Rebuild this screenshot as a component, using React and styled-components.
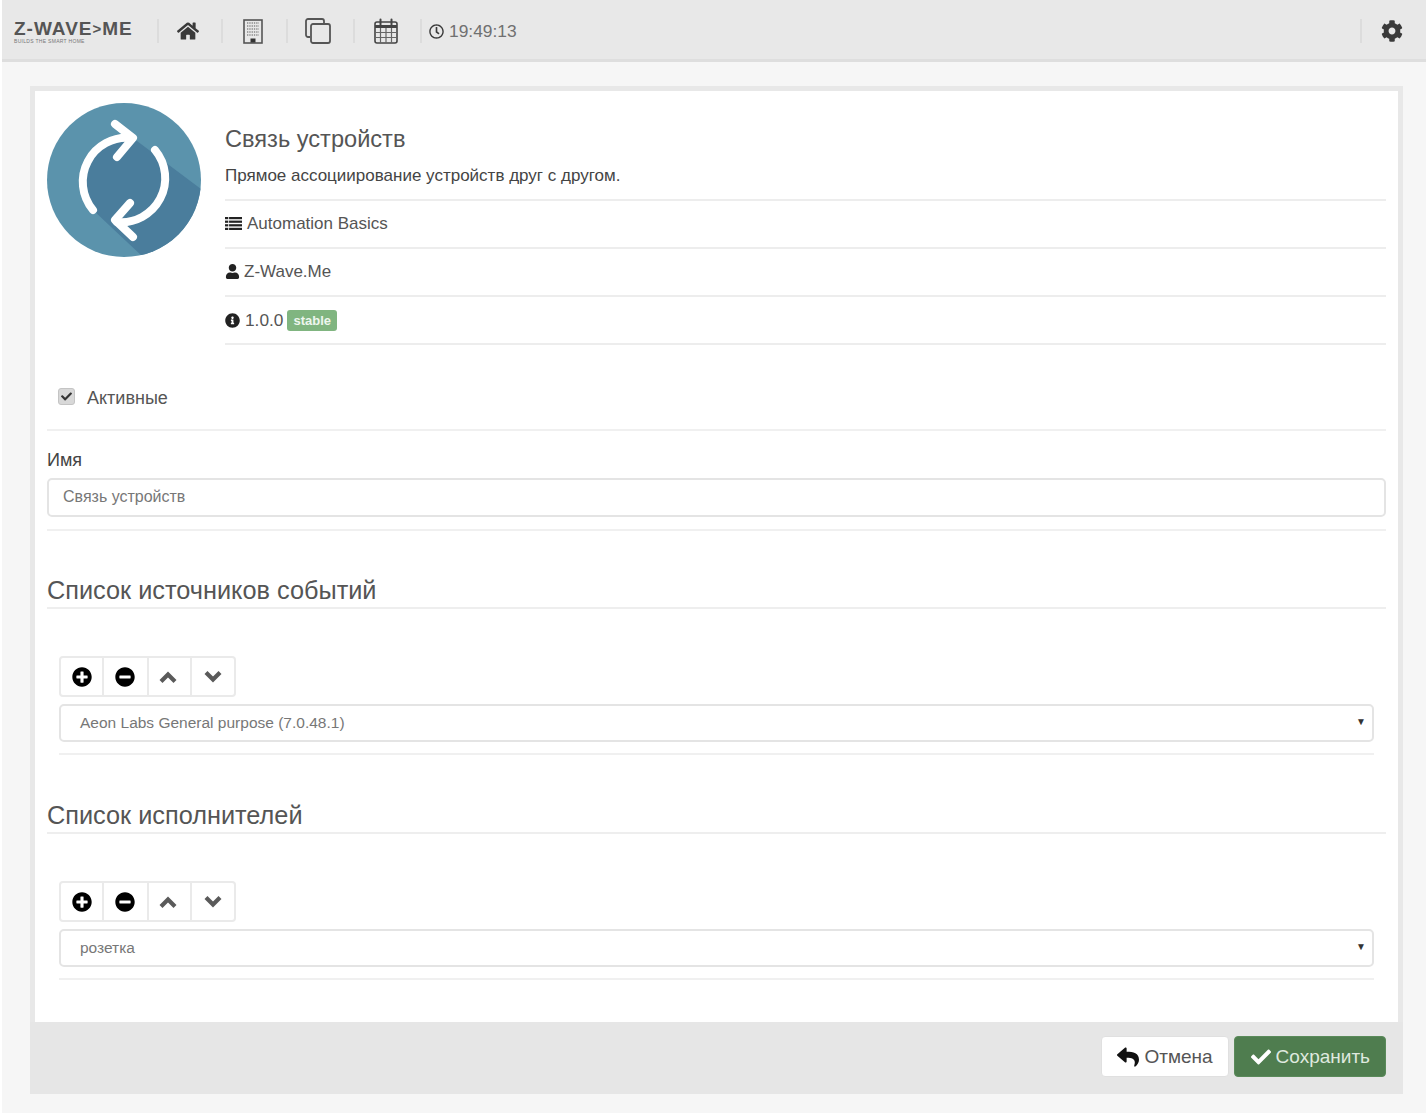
import React from 'react';
import styled, { createGlobalStyle } from 'styled-components';
import {
  FaHome, FaCog, FaUser, FaInfoCircle, FaCheck, FaReply,
  FaPlusCircle, FaMinusCircle, FaRegClock,
} from 'react-icons/fa';

const GlobalStyle = createGlobalStyle`
  html, body { margin: 0; padding: 0; background: #fff; }
  body { font-family: "Liberation Sans", Arial, sans-serif; color: #555; }
  * { box-sizing: border-box; }
`;

const Page = styled.div`
  width: 1428px;
  height: 1116px;
  padding: 0 2px 3px;
  overflow: hidden;
`;

const Inner = styled.div`
  height: 100%;
  background: #f6f6f6;
`;

const TopBar = styled.header`
  display: flex;
  align-items: center;
  height: 62px;
  padding: 3px 4px 0 12px;
  background: #e8e8e8;
  border-bottom: 3px solid #dedede;
`;

const Logo = styled.div`
  width: 143px;
  display: flex;
  flex-direction: column;
  color: #555;
`;

const LogoMark = styled.span`
  display: flex;
  align-items: center;
  font-size: 19px;
  line-height: 19px;
  font-weight: 700;
  letter-spacing: 1px;
`;

const LogoChevron = styled.span`
  font-size: 15px;
  letter-spacing: 0;
  margin: 0 1px 0 0;
`;

const LogoTag = styled.span`
  font-size: 5px;
  line-height: 6px;
  letter-spacing: 0.3px;
  color: #777;
`;

const NavSep = styled.span`
  width: 2px;
  height: 24px;
  background: #dcdcdc;
`;

const NavIcon = styled.span`
  display: flex;
  justify-content: center;
  align-items: center;
  width: ${p => p.$w}px;
  padding-right: ${p => p.$nudge || 0}px;
  color: #3a3a3a;
  font-size: 22px;
`;

const Clock = styled.span`
  display: flex;
  align-items: center;
  gap: 5px;
  margin-left: 7px;
  font-size: 17.4px;
  color: #707070;
  svg { font-size: 15px; color: #3a3a3a; }
`;

const Spacer = styled.div`
  flex: 1;
`;

const Card = styled.main`
  margin: 24px 23px 0 28px;
  border: 5px solid #e8e8e8;
  border-bottom: 0;
  background: #fff;
`;

const CardBody = styled.div`
  padding: 12px 12px 42px;
  height: 931px;
`;

const Head = styled.div`
  display: flex;
  gap: 24px;
`;

const Avatar = styled.svg`
  width: 154px;
  height: 154px;
  flex: none;
`;

const Info = styled.div`
  flex: 1;
`;

const InfoTitle = styled.div`
  height: 48px;
  padding-top: 21px;
  font-size: 23.6px;
  line-height: 30px;
  color: #555;
`;

const InfoRow = styled.div`
  display: flex;
  align-items: center;
  gap: ${p => p.$gap || 4}px;
  height: 48px;
  padding-bottom: ${p => p.$flush ? 0 : 1}px;
  border-bottom: 2px solid #ededed;
  font-size: 17px;
  color: #555;
  svg { color: #222; font-size: 15px; flex: none; }
`;

const DescRow = styled(InfoRow)`
  height: 50px;
  padding: 2px 0 0;
  color: #444;
`;

const VersionText = styled.span`
  font-size: 17.3px;
  margin-left: 1px;
`;

const Badge = styled.span`
  padding: 3px 6px;
  border-radius: 3px;
  background: #80b580;
  color: #eef6ee;
  font-size: 13px;
  line-height: 15px;
  font-weight: 700;
`;

const ActiveRow = styled.label`
  display: flex;
  align-items: center;
  gap: 12px;
  height: 86px;
  padding: 22px 0 0 11px;
  border-bottom: 2px solid #f0f0f0;
  font-size: 18px;
  color: #555;
`;

const CheckBox = styled.span`
  display: flex;
  align-items: center;
  justify-content: center;
  width: 17px;
  height: 17px;
  margin-top: -3px;
  border-radius: 3px;
  background: #d8d8d8;
  border: 1px solid #c4c4c4;
  color: #333;
  font-size: 11px;
`;

const FieldLabel = styled.div`
  margin-top: 18px;
  height: 20px;
  font-size: 18px;
  line-height: 22px;
  color: #444;
`;

const TextBox = styled.div`
  display: flex;
  align-items: center;
  height: 39px;
  margin-top: 9px;
  padding: 0 0 2px 14px;
  border: 2px solid #e4e4e4;
  border-radius: 5px;
  font-size: 16px;
  color: #777;
`;

const Rule = styled.div`
  height: 2px;
  margin-top: ${p => p.$top || 12}px;
  background: #f0f0f0;
`;

const SectionTitle = styled.h2`
  margin: ${p => p.$top}px 0 0;
  height: 34px;
  border-bottom: 2px solid #eee;
  font-size: 25.3px;
  line-height: 30px;
  font-weight: 400;
  color: #555;
`;

const ListBlock = styled.div`
  padding: 47px 12px 0;
`;

const BtnGroup = styled.div`
  display: inline-flex;
  height: 41px;
  border: 2px solid #eaeaea;
  border-radius: 4px;
  vertical-align: top;
`;

const GroupBtn = styled.span`
  display: flex;
  align-items: center;
  justify-content: center;
  width: ${p => p.$w}px;
  padding-right: ${p => p.$nudge || 0}px;
  color: #000;
  font-size: 20px;
  border-left: ${p => p.$first ? 0 : '2px solid #eaeaea'};
`;

const SelectBox = styled.div`
  display: flex;
  align-items: center;
  justify-content: space-between;
  height: 38px;
  margin-top: 7px;
  padding: 0 6px 0 19px;
  border: 2px solid #e4e4e4;
  border-radius: 5px;
  font-size: 15.5px;
  color: #777;
`;

const Caret = styled.span`
  font-size: 10px;
  color: #333;
  margin-top: -3px;
`;

const Footer = styled.footer`
  display: flex;
  justify-content: flex-end;
  gap: 5px;
  margin: 0 23px 0 28px;
  height: 72px;
  padding: 14px 17px 0 0;
  background: #e6e6e6;
`;

const Action = styled.span`
  display: flex;
  align-items: center;
  gap: 5px;
  height: 41px;
  padding: 0 15px 0 ${p => p.$primary ? 16 : 15}px;
  border-radius: 4px;
  font-size: 19px;
  background: ${p => p.$primary ? '#4f7d4f' : '#fff'};
  color: ${p => p.$primary ? '#dfe9df' : '#555'};
  border: 1px solid ${p => p.$primary ? '#5a8a5a' : '#e0e0e0'};
  svg { font-size: ${p => p.$primary ? 20 : 22}px; color: ${p => p.$primary ? '#fff' : '#111'}; }
`;

function BuildingIcon() {
  return (
    <svg width="20" height="25" viewBox="0 0 20 25">
      <rect x="1" y="1" width="18" height="23" fill="#e8e8e8" stroke="#555" strokeWidth="1.6" />
      {[4, 7, 10, 13, 16].map(y => (
        <path key={y} d={`M4 ${y}H16`} stroke="#888" strokeWidth="1.4" strokeDasharray="1.3 1" />
      ))}
      <rect x="7.5" y="19.5" width="5" height="4" fill="#333" />
    </svg>
  );
}

function CopyIcon() {
  return (
    <svg width="26" height="26" viewBox="0 0 26 26" fill="none" stroke="#555" strokeWidth="1.8">
      <path d="M5 19H3a2 2 0 0 1-2-2V3a2 2 0 0 1 2-2h14a2 2 0 0 1 2 2v2" />
      <rect x="6" y="6" width="19" height="19" rx="2" />
    </svg>
  );
}

function CalendarIcon() {
  return (
    <svg width="24" height="26" viewBox="0 0 24 26">
      <rect x="1" y="4" width="22" height="21" rx="2" fill="#e8e8e8" stroke="#444" strokeWidth="1.6" />
      <path d="M1 8.5H23" stroke="#444" strokeWidth="3" />
      <path d="M6.5 1.5v5M17.5 1.5v5" stroke="#444" strokeWidth="2" strokeLinecap="round" />
      <path d="M2 14.5H22M2 19.5H22M6.5 10V25M12 10V25M17.5 10V25" stroke="#666" strokeWidth="1.2" />
    </svg>
  );
}

function ListIcon() {
  return (
    <svg width="17" height="13" viewBox="0 0 17 13" fill="#222">
      <rect y="0" width="17" height="2.2" />
      <rect y="3.6" width="17" height="2.2" />
      <rect y="7.2" width="17" height="2.2" />
      <rect y="10.8" width="17" height="2.2" />
      <path d="M3.6 0V13" stroke="#fff" strokeWidth="0.8" />
    </svg>
  );
}

function ChevronIcon({ up }) {
  return (
    <svg width="18" height="12" viewBox="0 0 18 12" fill="none" stroke="#5a5a5a" strokeWidth="4.2">
      <path d={up ? 'M2 10.5L9 3.5L16 10.5' : 'M2 1.5L9 8.5L16 1.5'} />
    </svg>
  );
}

function ModuleBadge() {
  return (
    <Avatar viewBox="0 0 154 154">
      <defs>
        <clipPath id="disc">
          <circle cx="77" cy="77" r="77" />
        </clipPath>
      </defs>
      <circle cx="77" cy="77" r="77" fill="#5b93ac" />
      <path d="M86 35L154 86V154H96L46 107A44 44 0 0 1 86 35Z" fill="#4a7d9c" clipPath="url(#disc)" />
      <g fill="none" stroke="#fff" strokeWidth="8" strokeLinecap="round" strokeLinejoin="round">
        <path d="M46 107A44 44 0 0 1 84 35" />
        <path d="M68 21L86 35L70 54" />
        <path d="M108 47A44 44 0 0 1 70 119" />
        <path d="M83 100L68 117L86 134" />
      </g>
    </Avatar>
  );
}

function ListEditor({ value }) {
  return (
    <ListBlock>
      <BtnGroup>
        <GroupBtn $first $w={41}><FaPlusCircle /></GroupBtn>
        <GroupBtn $w={45} $nudge={2}><FaMinusCircle /></GroupBtn>
        <GroupBtn $w={43} $nudge={4}><ChevronIcon up /></GroupBtn>
        <GroupBtn $w={44}><ChevronIcon /></GroupBtn>
      </BtnGroup>
      <SelectBox>
        {value}
        <Caret>▼</Caret>
      </SelectBox>
      <Rule $top={11} />
    </ListBlock>
  );
}

export default function App() {
  return (
    <Page>
      <GlobalStyle />
      <Inner>
        <TopBar>
          <Logo>
            <LogoMark>Z-WAVE<LogoChevron>&gt;</LogoChevron>ME</LogoMark>
            <LogoTag>BUILDS THE SMART HOME</LogoTag>
          </Logo>
          <NavSep />
          <NavIcon $w={62} $nudge={4}><FaHome /></NavIcon>
          <NavSep />
          <NavIcon $w={63} $nudge={4}><BuildingIcon /></NavIcon>
          <NavSep />
          <NavIcon $w={65} $nudge={6}><CopyIcon /></NavIcon>
          <NavSep />
          <NavIcon $w={65} $nudge={4}><CalendarIcon /></NavIcon>
          <NavSep />
          <Clock><FaRegClock />19:49:13</Clock>
          <Spacer />
          <NavSep />
          <NavIcon $w={60}><FaCog /></NavIcon>
        </TopBar>

        <Card>
          <CardBody>
            <Head>
              <ModuleBadge />
              <Info>
                <InfoTitle>Связь устройств</InfoTitle>
                <DescRow>Прямое ассоциирование устройств друг с другом.</DescRow>
                <InfoRow $gap={5}><ListIcon />Automation Basics</InfoRow>
                <InfoRow><FaUser />Z-Wave.Me</InfoRow>
                <InfoRow $flush><FaInfoCircle /><VersionText>1.0.0</VersionText> <Badge>stable</Badge></InfoRow>
              </Info>
            </Head>

            <ActiveRow>
              <CheckBox><FaCheck /></CheckBox>
              Активные
            </ActiveRow>

            <FieldLabel>Имя</FieldLabel>
            <TextBox>Связь устройств</TextBox>
            <Rule />

            <SectionTitle $top={44}>Список источников событий</SectionTitle>
            <ListEditor value="Aeon Labs General purpose (7.0.48.1)" />

            <SectionTitle $top={45}>Список исполнителей</SectionTitle>
            <ListEditor value="розетка" />
          </CardBody>
        </Card>

        <Footer>
          <Action><FaReply />Отмена</Action>
          <Action $primary><FaCheck />Сохранить</Action>
        </Footer>
      </Inner>
    </Page>
  );
}
